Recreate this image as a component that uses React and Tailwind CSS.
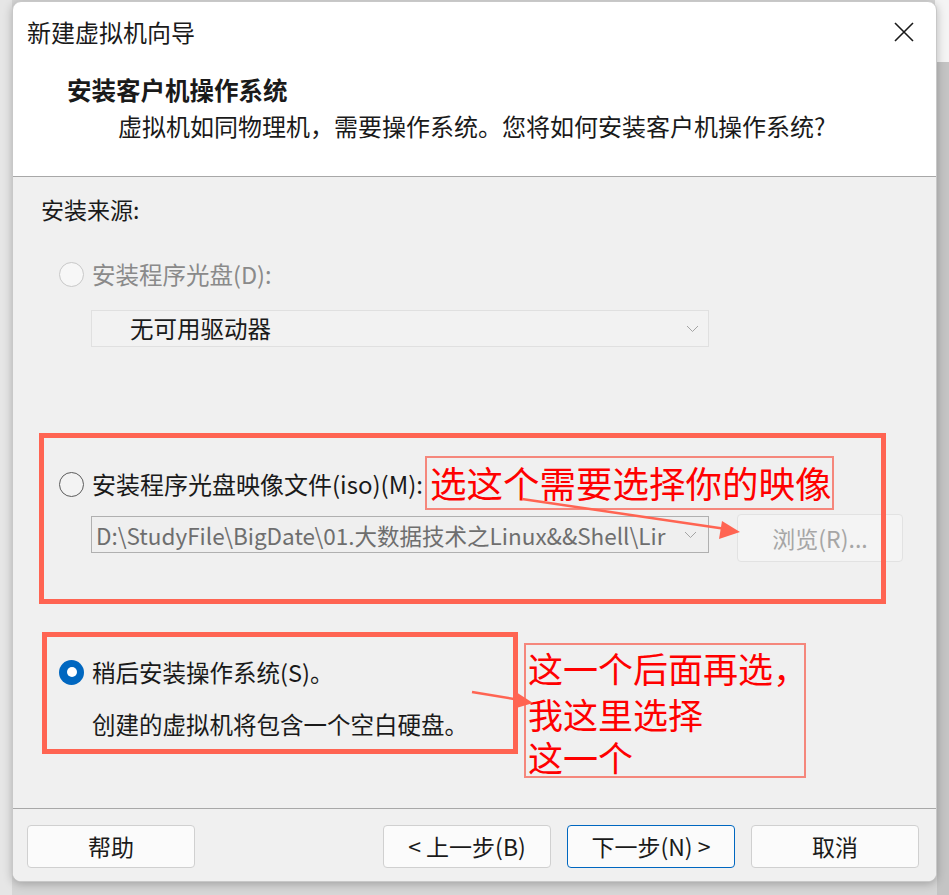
import React from 'react'

const font = "font-['Noto_Sans_CJK_SC','Noto_Sans',sans-serif]"

function Radio({ state }) {
  if (state === 'checked') {
    return (
      <span className="w-[25px] h-[25px] rounded-full bg-[#0067c0] flex items-center justify-center shrink-0">
        <span className="w-[10px] h-[10px] rounded-full bg-white" />
      </span>
    )
  }
  if (state === 'disabled') {
    return <span className="w-[25px] h-[25px] rounded-full border-[1.5px] border-[#c8c8c8] bg-[#f7f7f7] shrink-0" />
  }
  return <span className="w-[25px] h-[25px] rounded-full border-[1.5px] border-[#5c5c5c] bg-[#f3f3f3] shrink-0" />
}

function Chevron() {
  return (
    <svg width="13" height="8" viewBox="0 0 13 8" className="shrink-0">
      <path d="M1 1 L6.5 6.5 L12 1" fill="none" stroke="#a4a4a4" strokeWidth="1" />
    </svg>
  )
}

function Button({ children, primary }) {
  return (
    <button
      className={
        'h-[43px] w-[168px] rounded-[4px] bg-[#fbfbfb] text-[23px] leading-none text-[#1a1a1a] flex items-center justify-center border ' +
        (primary ? 'border-[#0067c0]' : 'border-[#d0d0d0]')
      }
    >
      {children}
    </button>
  )
}

export default function App() {
  return (
    <div className={`relative w-[949px] h-[895px] overflow-hidden bg-[#d6d6d6] ${font}`}>
      {/* background strips behind the dialog */}
      <div className="absolute right-0 top-0 w-[14px] h-[62px] bg-[#f4f4f4]" />
      <div className="absolute right-0 top-[62px] w-[12px] h-[833px] bg-[#c4c4c4]" />
      <div className="absolute left-0 top-0 w-[12px] h-[895px] bg-[#e6e6e6]" />

      <div className="pl-[12px] pt-[1px]">
        <div className="relative w-[925px] h-[881px] rounded-[9px] bg-white overflow-hidden shadow-[0_2px_10px_rgba(0,0,0,0.25)] border border-[#c8c8c8] flex flex-col">
          {/* title bar */}
          <div className="h-[59px] flex items-center justify-between pl-[14px] pr-[22px] shrink-0">
            <span className="text-[24px] leading-8 text-[#1a1a1a]">新建虚拟机向导</span>
            <svg width="20" height="20" viewBox="0 0 20 20">
              <path d="M1 1 L19 19 M19 1 L1 19" stroke="#1a1a1a" strokeWidth="1.6" fill="none" />
            </svg>
          </div>

          {/* header */}
          <div className="h-[116px] pt-[13px] border-b border-[#a8a8a8] shrink-0">
            <div className="pl-[54px] text-[24.5px] leading-8 font-bold text-[#1a1a1a]">安装客户机操作系统</div>
            <div className="pl-[105px] mt-[4px] text-[24px] leading-8 text-[#1a1a1a]">
              虚拟机如同物理机，需要操作系统。您将如何安装客户机操作系统?
            </div>
          </div>

          {/* body */}
          <div className="h-[631px] bg-[#f0f0f0] pt-[16px] shrink-0">
            <div className="pl-[28px] text-[23px] leading-8 text-[#1a1a1a]">安装来源:</div>

            <div className="mt-[33px] pl-[46px] h-8 flex items-center gap-[8px]">
              <Radio state="disabled" />
              <span className="text-[23.5px] leading-8 text-[#8a8a8a]">安装程序光盘(D):</span>
            </div>
            <div className="mt-[20px] ml-[78px] w-[618px] h-[37px] bg-[#f2f2f2] border border-[#e0e0e0] flex items-center justify-between pl-[38px] pr-[9px]">
              <span className="text-[23.5px] leading-none text-[#1a1a1a]">无可用驱动器</span>
              <Chevron />
            </div>

            <div className="mt-[121px] pl-[46px] h-8 flex items-center gap-[8px]">
              <Radio />
              <span className="text-[24px] leading-8 text-[#1a1a1a]">安装程序光盘映像文件(iso)(M):</span>
            </div>
            <div className="mt-[14px] ml-[78px] flex items-start gap-[28px]">
              <div className="mt-[2px] w-[618px] h-[37px] bg-[#efefef] border border-[#b0b0b0] flex items-center pl-[4px] pr-[9px] gap-[10px]">
                <div className="w-[578px] overflow-hidden whitespace-nowrap text-[22.5px] leading-[30px] text-[#6e6e6e]">
                  {'D:\\StudyFile\\BigDate\\01.大数据技术之Linux&&Shell\\Lir'}
                </div>
                <Chevron />
              </div>
              <div className="w-[166px] h-[48px] rounded-[4px] bg-[#f4f4f4] border border-[#e2e2e2] flex items-center justify-center text-[23px] leading-none text-[#a6a6a6]">
                浏览(R)...
              </div>
            </div>

            <div className="mt-[94px] pl-[46px] h-8 flex items-center gap-[8px]">
              <Radio state="checked" />
              <span className="text-[23.5px] leading-8 text-[#1a1a1a]">稍后安装操作系统(S)。</span>
            </div>
            <div className="mt-[20px] pl-[79px] text-[23.5px] leading-8 text-[#1a1a1a]">创建的虚拟机将包含一个空白硬盘。</div>
          </div>

          {/* footer */}
          <div className="flex-1 border-t border-[#a8a8a8] bg-[#f0f0f0] pt-[16px] pl-[14px] pr-[17px] flex items-start">
            <Button>帮助</Button>
            <div className="flex-1" />
            <div className="flex gap-[16px]">
              <Button>&lt; 上一步(B)</Button>
              <Button primary>下一步(N) &gt;</Button>
              <Button>取消</Button>
            </div>
          </div>
        </div>
      </div>

      {/* annotations drawn over the screenshot */}
      <div className="absolute left-[39px] top-[433px] w-[847px] h-[171px] border-[5px] border-[#ff6452]" />
      <div className="absolute left-[42px] top-[632px] w-[476px] h-[122px] border-[5px] border-[#ff6452]" />

      <div className="absolute left-[425px] top-[456px] w-[409px] h-[54px] border-2 border-[#f5877c] bg-[#f0f0f0] flex items-center pl-[3px] text-[36.5px] leading-none text-[#ff0000] whitespace-nowrap">
        选这个需要选择你的映像
      </div>
      <div className="absolute left-[524px] top-[643px] w-[282px] h-[135px] border-2 border-[#f5877c] pl-[2px] text-[35px] leading-[45px] text-[#ff0000] whitespace-nowrap">
        <div className="h-[46px] leading-[46px]">这一个后面再选，</div>
        <div className="h-[46px] leading-[46px]">我这里选择</div>
        <div className="h-[40px] leading-[40px]">这一个</div>
      </div>

      <svg className="absolute left-0 top-0 pointer-events-none" width="949" height="895">
        <line x1="522" y1="499" x2="726" y2="529" stroke="#ff6452" strokeWidth="2.5" />
        <polygon points="740,532 722,521 719,539" fill="#ff6452" />
        <line x1="472" y1="692" x2="520" y2="700" stroke="#ff6452" strokeWidth="2.5" />
        <polygon points="533,703 516,692 513,709" fill="#ff6452" />
      </svg>
    </div>
  )
}
